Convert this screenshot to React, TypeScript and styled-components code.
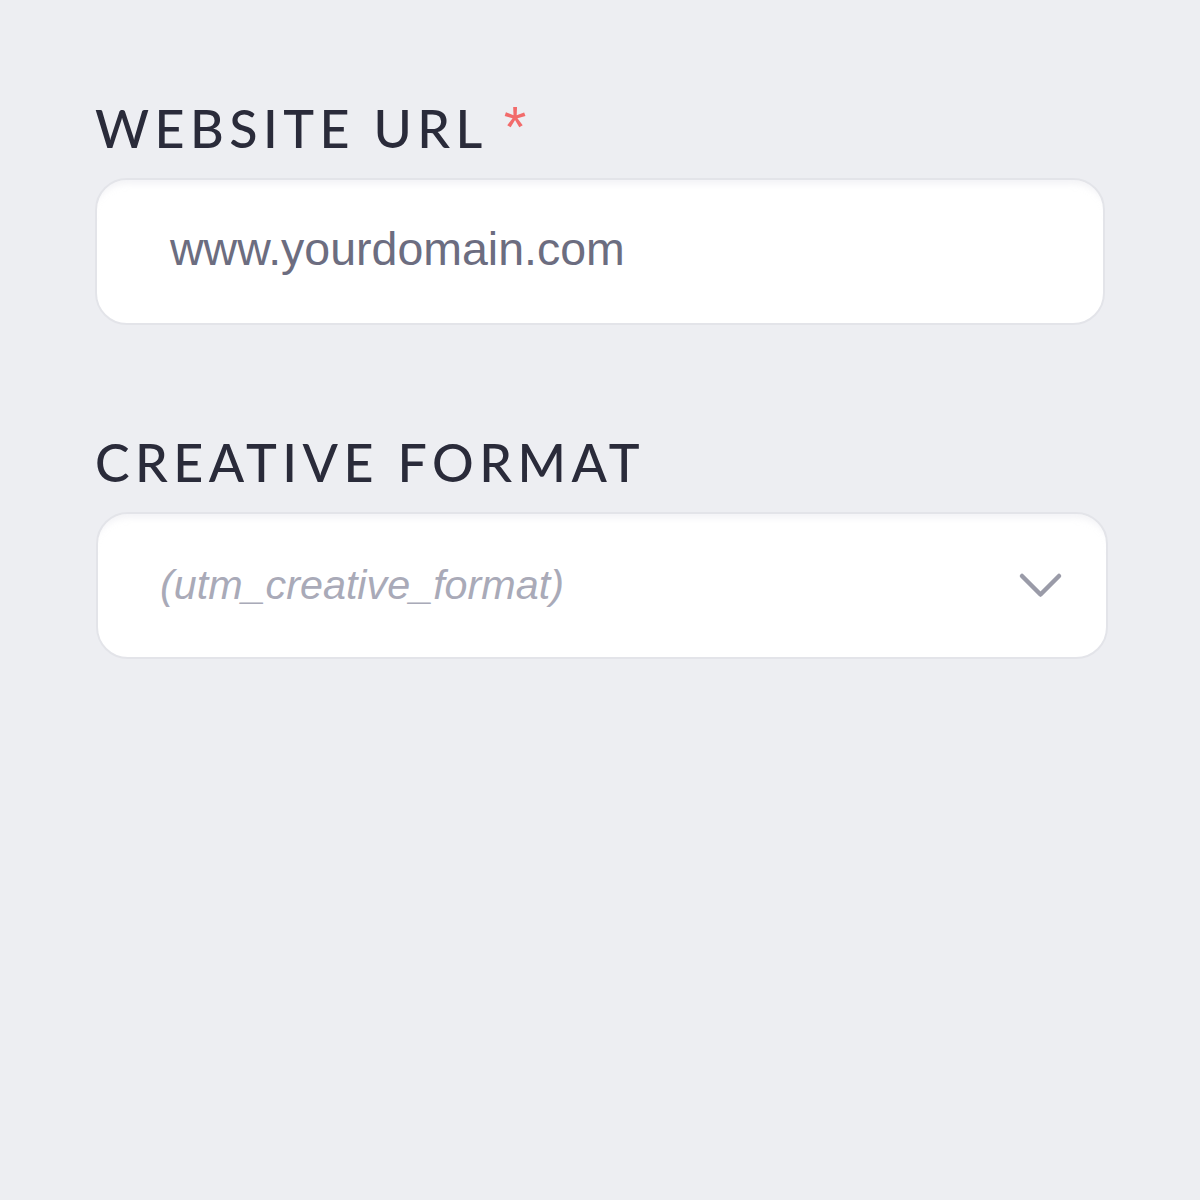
import React from "react";
import styled, { createGlobalStyle } from "styled-components";

const Global = createGlobalStyle`
  html, body { margin: 0; padding: 0; background: #edeef2; }
  body { font-family: "Liberation Sans", Arial, sans-serif; }
`;

const Page = styled.div`
  width: 1200px;
  min-height: 1200px;
  box-sizing: border-box;
  padding: 96px 0 0 95px;
  display: flex;
  flex-direction: column;
`;

const Field = styled.div<{ $gap?: number }>`
  display: flex;
  flex-direction: column;
  margin-bottom: ${(p) => p.$gap ?? 0}px;
`;

const Label = styled.label`
  font-family: "Lato", "Noto Sans", sans-serif;
  font-weight: 500;
  font-size: 52px;
  line-height: 64px;
  letter-spacing: 0.105em;
  color: #2a2b3a;
  text-transform: uppercase;
  display: flex;
  align-items: flex-start;
  margin-bottom: 18px;
`;

const Required = styled.span`
  font-family: "Liberation Sans", Arial, sans-serif;
  color: #f26b6b;
  font-size: 58px;
  line-height: 58px;
  margin-left: 16px;
  letter-spacing: 0;
  margin-top: 2px;
`;

const Box = styled.div<{ $left?: number; $width: number; $pad: number }>`
  width: ${(p) => p.$width}px;
  height: 147px;
  box-sizing: border-box;
  background: #ffffff;
  border: 2px solid #e3e4e9;
  border-radius: 32px;
  box-shadow: inset 0 10px 6px -6px rgba(220, 222, 230, 0.35);
  display: flex;
  align-items: center;
  margin-left: ${(p) => p.$left ?? 0}px;
  padding: 0 43px 0 ${(p) => p.$pad}px;
`;

const Value = styled.span`
  font-family: "Liberation Sans", Arial, sans-serif;
  font-size: 46.5px;
  color: #6c6d80;
  flex: 1;
  margin-top: -6px;
`;

const Placeholder = styled.span`
  font-family: "Liberation Sans", Arial, sans-serif;
  font-style: italic;
  font-size: 41.3px;
  color: #a9aab8;
  flex: 1;
`;

const ChevronWrap = styled.div`
  display: flex;
  margin-top: 3px;
`;

const Chevron = () => (
  <ChevronWrap>
    <svg width="46" height="30" viewBox="0 0 46 30" fill="none">
      <path d="M5 4 L23.5 22.5 L42 4" stroke="#9a9ba8" strokeWidth="4.5" strokeLinecap="round" strokeLinejoin="round" />
    </svg>
  </ChevronWrap>
);

export default function App() {
  return (
    <>
      <Global />
      <Page>
        <Field $gap={105}>
          <Label>
            Website URL<Required>*</Required>
          </Label>
          <Box $width={1010} $pad={73}>
            <Value>www.yourdomain.com</Value>
          </Box>
        </Field>
        <Field>
          <Label>Creative Format</Label>
          <Box $left={1} $width={1012} $pad={62}>
            <Placeholder>(utm_creative_format)</Placeholder>
            <Chevron />
          </Box>
        </Field>
      </Page>
    </>
  );
}
